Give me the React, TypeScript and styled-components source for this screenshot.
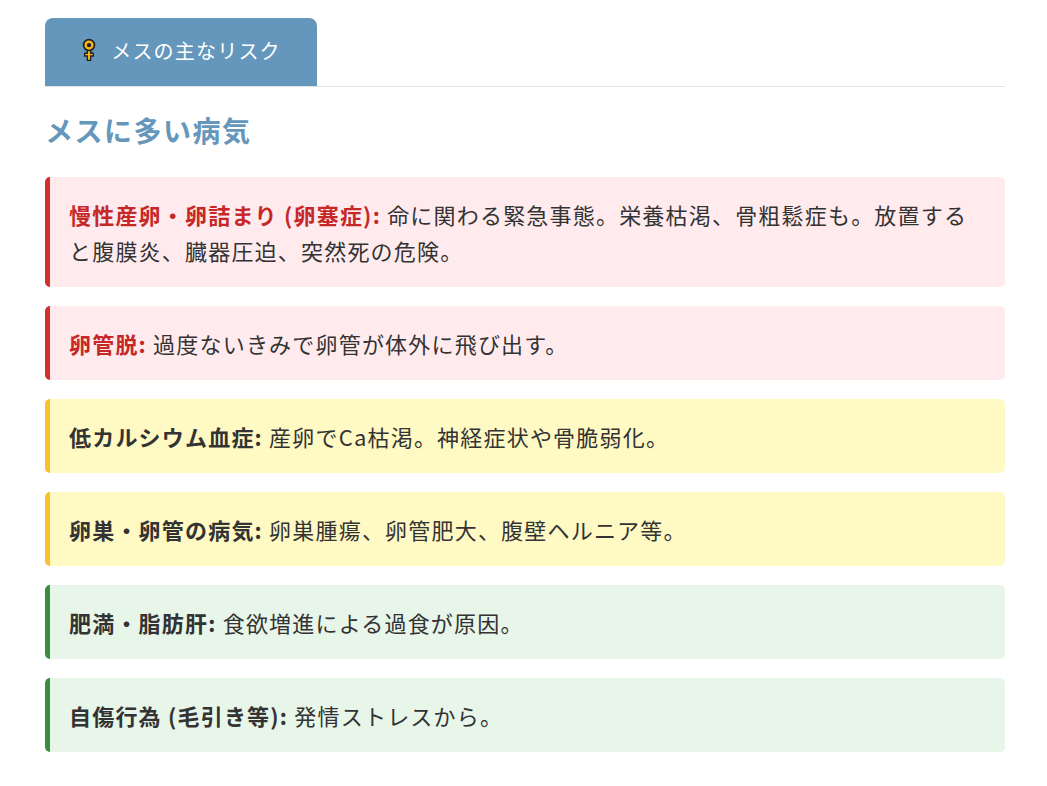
import React from "react";
import styled, { createGlobalStyle } from "styled-components";

const Global = createGlobalStyle`
  body { margin: 0; background: #fff; font-family: "Noto Sans CJK JP", "Noto Sans", sans-serif; color: #333; }
`;
const Wrap = styled.div`width: 960px; margin: 18px 0 0 45px; letter-spacing: 1.2px;`;
const TabBar = styled.div`display: flex; border-bottom: 1px solid #e3e3e3;`;
const Tab = styled.div`
  width: 272px; height: 68px; background: #6497bb; color: #fff; border-radius: 8px 8px 0 0;
  display: flex; align-items: center; justify-content: center; gap: 14px; font-size: 20px; padding-bottom: 4px; box-sizing: border-box;
`;
const Heading = styled.h2`margin: 22px 0 26px; font-size: 28px; font-weight: 700; color: #6497bb; line-height: 42px; letter-spacing: 1.5px;`;
const List = styled.div`display: flex; flex-direction: column; gap: 19px;`;
const tones = {
  red: { bg: "#ffebee", bd: "#d32f2f", fg: "#c62828" },
  yellow: { bg: "#fff9c4", bd: "#fbc02d", fg: "#333" },
  green: { bg: "#e8f5e9", bd: "#388e3c", fg: "#333" },
};
type Tone = keyof typeof tones;
const Card = styled.div<{ $t: Tone }>`
  background: ${p => tones[p.$t].bg}; border-left: 5px solid ${p => tones[p.$t].bd};
  border-radius: 5px; padding: 19px 20px 19px 19px; font-size: 22px; line-height: 36px;
`;
const Label = styled.strong<{ $t: Tone }>`color: ${p => tones[p.$t].fg}; font-weight: 700;`;

const items: [Tone, string, string][] = [
  ["red", "慢性産卵・卵詰まり (卵塞症):", "命に関わる緊急事態。栄養枯渇、骨粗鬆症も。放置すると腹膜炎、臓器圧迫、突然死の危険。"],
  ["red", "卵管脱:", "過度ないきみで卵管が体外に飛び出す。"],
  ["yellow", "低カルシウム血症:", "産卵でCa枯渇。神経症状や骨脆弱化。"],
  ["yellow", "卵巣・卵管の病気:", "卵巣腫瘍、卵管肥大、腹壁ヘルニア等。"],
  ["green", "肥満・脂肪肝:", "食欲増進による過食が原因。"],
  ["green", "自傷行為 (毛引き等):", "発情ストレスから。"],
];

const Female = () => (
  <svg width="16" height="24" viewBox="0 0 14 22">
    <circle cx="7" cy="6.5" r="5" fill="#f9b51c" stroke="#222" strokeWidth="1.6" />
    <circle cx="7" cy="6.5" r="2" fill="#222" />
    <path d="M5.5 11.5h3v2.5h2.5v2.5h-2.5v4h-3v-4h-2.5v-2.5h2.5z" fill="#f9b51c" stroke="#222" strokeWidth="1.2" />
  </svg>
);

export default function App() {
  return (
    <>
      <Global />
      <Wrap>
        <TabBar><Tab><Female />メスの主なリスク</Tab></TabBar>
        <Heading>メスに多い病気</Heading>
        <List>
          {items.map(([t, l, d]) => (
            <Card key={l} $t={t}><Label $t={t}>{l}</Label> {d}</Card>
          ))}
        </List>
      </Wrap>
    </>
  );
}
